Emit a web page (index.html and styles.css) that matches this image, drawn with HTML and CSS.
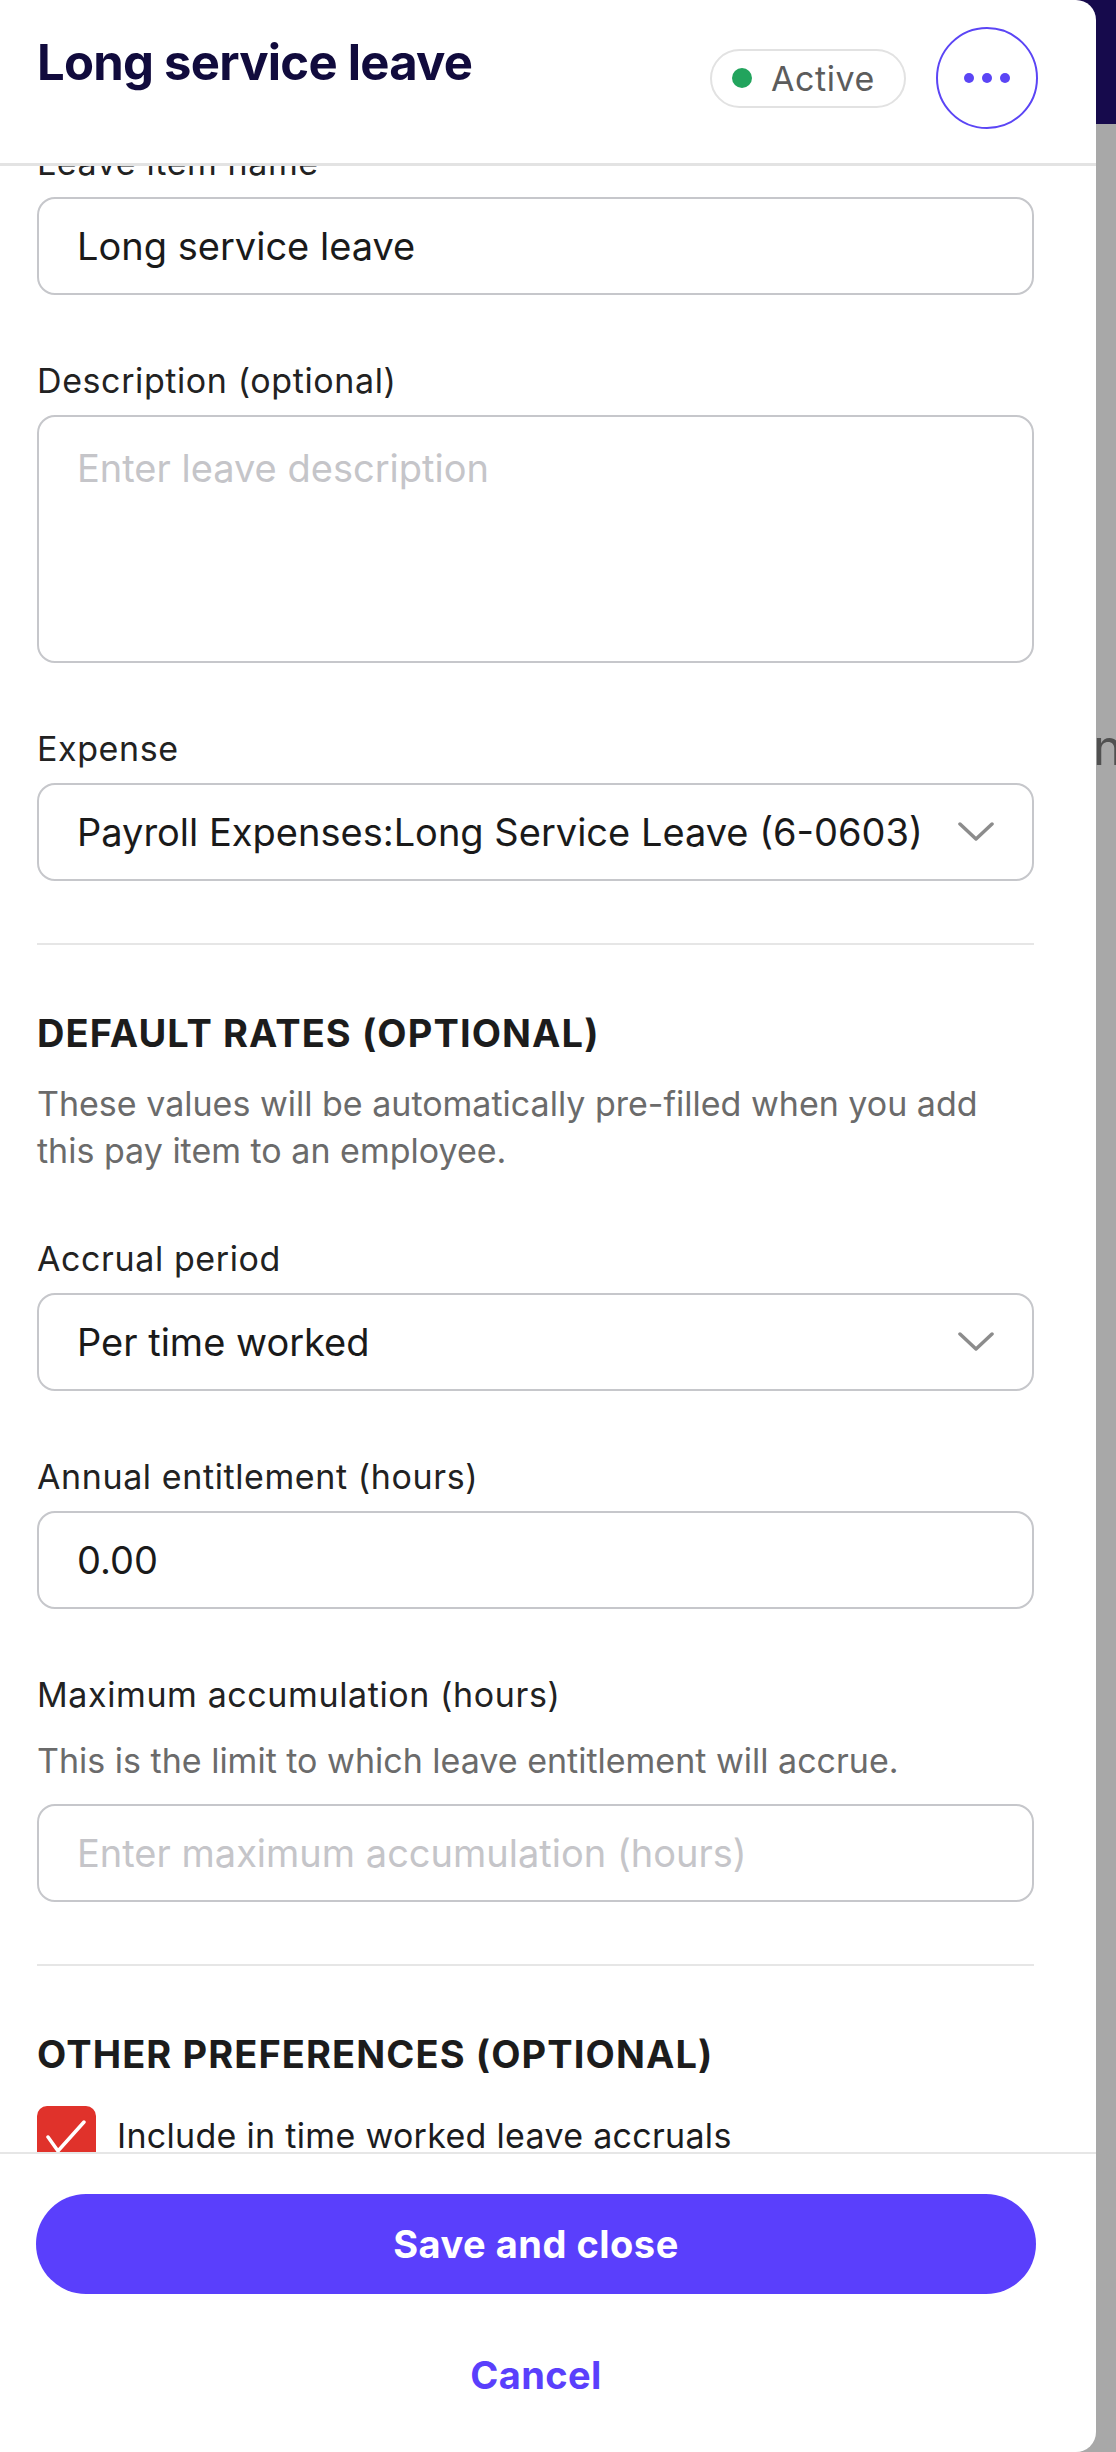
FILE: index.html
```html
<!DOCTYPE html>
<html lang="en">
<head>
<meta charset="utf-8">
<title>Long service leave</title>
<link rel="stylesheet" href="styles.css">
</head>
<body>
<div class="screen">
  <aside class="panel">
    <header class="panel-header">
      <h1 class="title">Long service leave</h1>
      <div class="header-actions">
        <span class="status-pill"><span class="status-dot"></span>Active</span>
        <button class="more-btn" type="button" aria-label="More options"><span class="dot"></span><span class="dot"></span><span class="dot"></span></button>
      </div>
    </header>

    <div class="panel-body">
      <form class="form is-scrolled">
        <div class="field">
          <label class="label" for="name">Leave item name</label>
          <input class="input" id="name" type="text" value="Long service leave">
        </div>

        <div class="field">
          <label class="label" for="desc">Description (optional)</label>
          <textarea class="input textarea" id="desc" placeholder="Enter leave description"></textarea>
        </div>

        <div class="field">
          <span class="label">Expense</span>
          <div class="input select">
            <span class="select-value">Payroll Expenses:Long Service Leave (6-0603)</span>
            <svg class="chevron" viewBox="0 0 36 20" width="36" height="20"><path d="M2 2 L18 17 L34 2" fill="none" stroke="#8c8c8c" stroke-width="3.5" stroke-linecap="round" stroke-linejoin="round"/></svg>
          </div>
        </div>

        <hr class="divider">

        <h2 class="section-title">DEFAULT RATES (OPTIONAL)</h2>
        <p class="help section-help">These values will be automatically pre-filled when you add this pay item to an employee.</p>

        <div class="field field-after-help">
          <span class="label">Accrual period</span>
          <div class="input select">
            <span class="select-value">Per time worked</span>
            <svg class="chevron" viewBox="0 0 36 20" width="36" height="20"><path d="M2 2 L18 17 L34 2" fill="none" stroke="#8c8c8c" stroke-width="3.5" stroke-linecap="round" stroke-linejoin="round"/></svg>
          </div>
        </div>

        <div class="field">
          <label class="label" for="annual">Annual entitlement (hours)</label>
          <input class="input" id="annual" type="text" value="0.00">
        </div>

        <div class="field">
          <label class="label" for="max">Maximum accumulation (hours)</label>
          <p class="help field-help">This is the limit to which leave entitlement will accrue.</p>
          <input class="input" id="max" type="text" placeholder="Enter maximum accumulation (hours)">
        </div>

        <hr class="divider">

        <h2 class="section-title">OTHER PREFERENCES (OPTIONAL)</h2>
        <div class="check-row">
          <span class="checkbox"><svg viewBox="0 0 59 59" width="59" height="59"><path d="M11 31 L21 45 L47 16" fill="none" stroke="#fff" stroke-width="3.5" stroke-linecap="round" stroke-linejoin="round"/></svg></span>
          <span class="check-label">Include in time worked leave accruals</span>
        </div>
      </form>
    </div>

    <footer class="panel-footer">
      <button class="btn-primary" type="button">Save and close</button>
      <button class="btn-link" type="button">Cancel</button>
    </footer>
  </aside>
  <div class="backdrop"><span class="backdrop-text">n</span></div>
</div>
</body>
</html>
```

FILE: styles.css
```css
* { box-sizing: border-box; }

html, body {
  margin: 0;
  height: 2452px;
  overflow: hidden;
}

body {
  font-family: Inter, "Liberation Sans", sans-serif;
  background: linear-gradient(#160a4c 0, #160a4c 124px, #a8a8a8 124px);
  color: #1c1c1e;
}

.screen {
  display: flex;
  height: 2452px;
}

/* ---------- panel ---------- */
.panel {
  flex: none;
  width: 1096px;
  height: 2452px;
  background: #fff;
  border-radius: 0 20px 20px 0;
  display: flex;
  flex-direction: column;
  overflow: hidden;
}

.panel-header {
  flex: none;
  height: 166px;
  border-bottom: 3px solid #e3e3e3;
  display: flex;
  align-items: flex-start;
  padding: 27px 58px 0 37px;
}

.title {
  flex: 1;
  margin: 7px 0 0;
  font-size: 49px;
  line-height: 1.2;
  font-weight: 700;
  color: #110b3d;
  letter-spacing: -0.75px;
}

.header-actions {
  display: flex;
  align-items: center;
  gap: 30px;
  height: 102px;
}

.status-pill {
  display: flex;
  align-items: center;
  gap: 19px;
  height: 59px;
  padding: 0 29px 0 20px;
  border: 2px solid #e2e2e2;
  border-radius: 30px;
  font-size: 34px;
  letter-spacing: 0.6px;
  color: #5c5c5c;
}

.status-dot {
  width: 20px;
  height: 20px;
  border-radius: 50%;
  background: #22a45d;
}

.more-btn {
  width: 102px;
  height: 102px;
  padding: 0;
  border: 2px solid #5b45f5;
  border-radius: 50%;
  background: #fff;
  display: flex;
  align-items: center;
  justify-content: center;
  gap: 8px;
}

.more-btn .dot {
  width: 10px;
  height: 10px;
  border-radius: 50%;
  background: #5b45f5;
}

/* ---------- body / form ---------- */
.panel-body {
  flex: 1;
  min-height: 0;
  overflow: hidden;
  padding: 0 62px 0 37px;
}

.form.is-scrolled {
  margin-top: -23px;
}

.field {
  display: flex;
  flex-direction: column;
}

.field + .field {
  margin-top: 66px;
}

.field-after-help {
  margin-top: 65px;
}

.label {
  display: block;
  font-size: 34px;
  line-height: 40px;
  letter-spacing: 0.6px;
  color: #222;
  margin-bottom: 14px;
}

.input {
  display: block;
  width: 100%;
  height: 98px;
  margin: 0;
  padding: 0 38px;
  border: 2px solid #c6c7cb;
  border-radius: 18px;
  background: #fff;
  font-family: inherit;
  font-size: 38px;
  color: #1a1a1a;
  outline: none;
}

.input::placeholder {
  color: #c5c5c9;
  opacity: 1;
}

.textarea {
  height: 248px;
  padding-top: 28px;
  line-height: 46px;
  resize: none;
}

.select {
  display: flex;
  align-items: center;
  justify-content: space-between;
  padding-right: 38px;
}

.select-value {
  white-space: nowrap;
}

.chevron {
  flex: none;
  display: block;
}

.divider {
  border: 0;
  height: 2px;
  margin: 62px 0 0;
  background: #e6e6e6;
}

.section-title {
  margin: 66px 0 0;
  font-size: 38px;
  line-height: 44px;
  letter-spacing: 1.1px;
  font-weight: 700;
  color: #1c1c1c;
}

.help {
  margin: 0;
  font-size: 34px;
  line-height: 47px;
  letter-spacing: 0;
  color: #6b6b6b;
}

.section-help {
  margin-top: 25px;
}

.field-help {
  margin-top: 8px;
  margin-bottom: 20px;
}

.check-row {
  display: flex;
  align-items: center;
  gap: 21px;
  margin-top: 30px;
}

.checkbox {
  flex: none;
  width: 59px;
  height: 59px;
  border-radius: 10px;
  background: #e0322b;
  display: flex;
}

.check-label {
  font-size: 34px;
  letter-spacing: 0.3px;
  color: #1c1c1e;
}

/* ---------- footer ---------- */
.panel-footer {
  flex: none;
  height: 300px;
  border-top: 2px solid #e6e6e6;
  display: flex;
  flex-direction: column;
  align-items: center;
  padding: 40px 60px 0 36px;
}

.btn-primary {
  width: 100%;
  height: 100px;
  border: 0;
  border-radius: 50px;
  background: #5a3ffc;
  color: #fff;
  font-family: inherit;
  font-size: 38px;
  letter-spacing: 0.5px;
  font-weight: 700;
}

.btn-link {
  margin-top: 58px;
  padding: 0;
  border: 0;
  background: none;
  font-family: inherit;
  font-size: 38px;
  line-height: 46px;
  letter-spacing: 0.4px;
  font-weight: 700;
  color: #5a3ffc;
}

/* ---------- backdrop ---------- */
.backdrop {
  flex: 1;
  overflow: hidden;
  padding-top: 717px;
  font-size: 50px;
  line-height: 60px;
  color: #505050;
  white-space: nowrap;
}

.backdrop-text {
  margin-left: -3px;
}
```
